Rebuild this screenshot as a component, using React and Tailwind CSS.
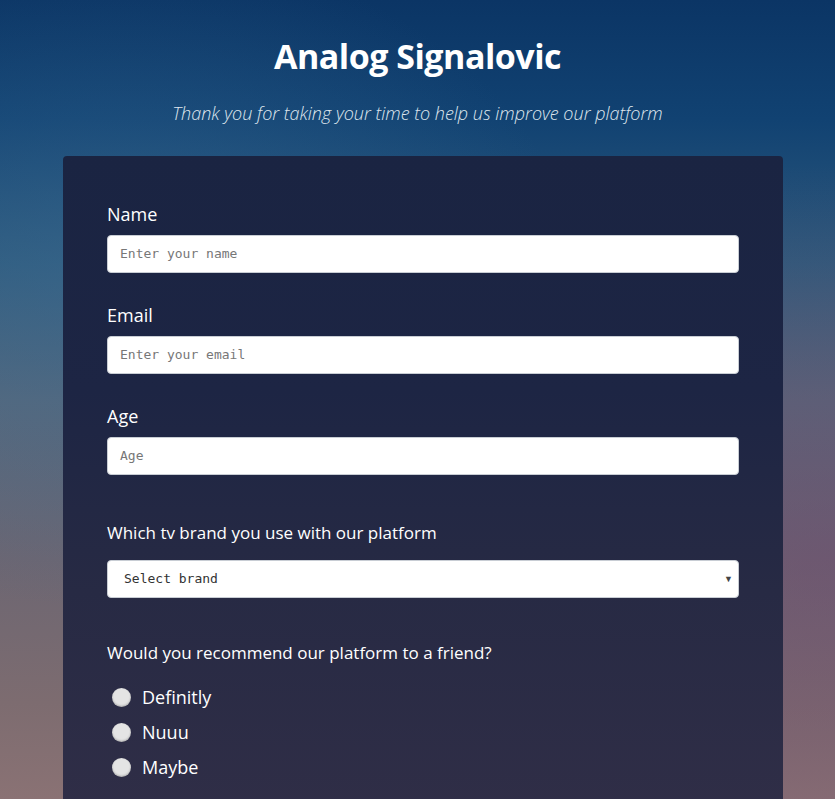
import React from "react";

const labelFont = { fontFamily: '"Open Sans", "Noto Sans", sans-serif' };

function Field({ label, placeholder }) {
  return (
    <div className="flex flex-col">
      <label className="text-[18px] leading-[24px] text-white mb-[9px]" style={labelFont}>{label}</label>
      <div className="h-[38px] bg-white rounded-[4px] border border-[#c8cdd4] flex items-center px-[12px]">
        <span className="text-[13px] text-[#777]" style={{ fontFamily: '"DejaVu Sans Mono", monospace' }}>{placeholder}</span>
      </div>
    </div>
  );
}

function Radio({ label }) {
  return (
    <div className="flex items-center h-[35px] pl-[5px]">
      <span className="w-[19px] h-[19px] rounded-full bg-[#e4e4e4] shadow-[inset_0_-1px_2px_rgba(0,0,0,0.25)]"></span>
      <span className="ml-[11px] text-[18px] text-white" style={labelFont}>{label}</span>
    </div>
  );
}

export default function App() {
  return (
    <div
      className="w-[835px] h-[799px] overflow-hidden relative bg-[radial-gradient(ellipse_at_15%_35%,rgba(60,110,150,0.45),transparent_45%),radial-gradient(ellipse_at_100%_70%,rgba(110,70,110,0.45),transparent_50%),linear-gradient(180deg,#0b3565_0%,#114272_15%,#2f5a7c_33%,#57677a_50%,#6c6672_70%,#7d6c70_88%,#8a7274_100%)]"
    >
      <div className="flex flex-col items-center">
        <h1 className="mt-[33px] text-[34px] leading-[46px] font-bold text-white tracking-[-0.5px]" style={labelFont}>Analog Signalovic</h1>
        <p className="mt-[21px] text-[18px] italic font-light text-[#dfe6ee]" style={labelFont}>Thank you for taking your time to help us improve our platform</p>
      </div>
      <div className="ml-[63px] w-[720px] mt-[29px] rounded-[4px] bg-[linear-gradient(180deg,#1a2442_0%,#1d2544_35%,#272a44_65%,#302e47_100%)] px-[44px] pt-[46px] pb-[40px]">
        <div className="flex flex-col gap-[30px]">
          <Field label="Name" placeholder="Enter your name" />
          <Field label="Email" placeholder="Enter your email" />
          <Field label="Age" placeholder="Age" />
        </div>
        <div className="mt-[47px]">
          <p className="text-[17px] leading-[22px] text-white" style={labelFont}>Which tv brand you use with our platform</p>
          <div className="mt-[16px] h-[38px] bg-white rounded-[4px] border border-[#c8cdd4] flex items-center justify-between pl-[16px] pr-[5px]">
            <span className="text-[13px] text-[#333]" style={{ fontFamily: '"DejaVu Sans Mono", monospace' }}>Select brand</span>
            <span className="text-[9px] text-[#444]">▼</span>
          </div>
        </div>
        <div className="mt-[44px]">
          <p className="text-[17px] leading-[22px] text-white" style={labelFont}>Would you recommend our platform to a friend?</p>
          <div className="mt-[16px] flex flex-col">
            <Radio label="Definitly" />
            <Radio label="Nuuu" />
            <Radio label="Maybe" />
          </div>
        </div>
      </div>
    </div>
  );
}
